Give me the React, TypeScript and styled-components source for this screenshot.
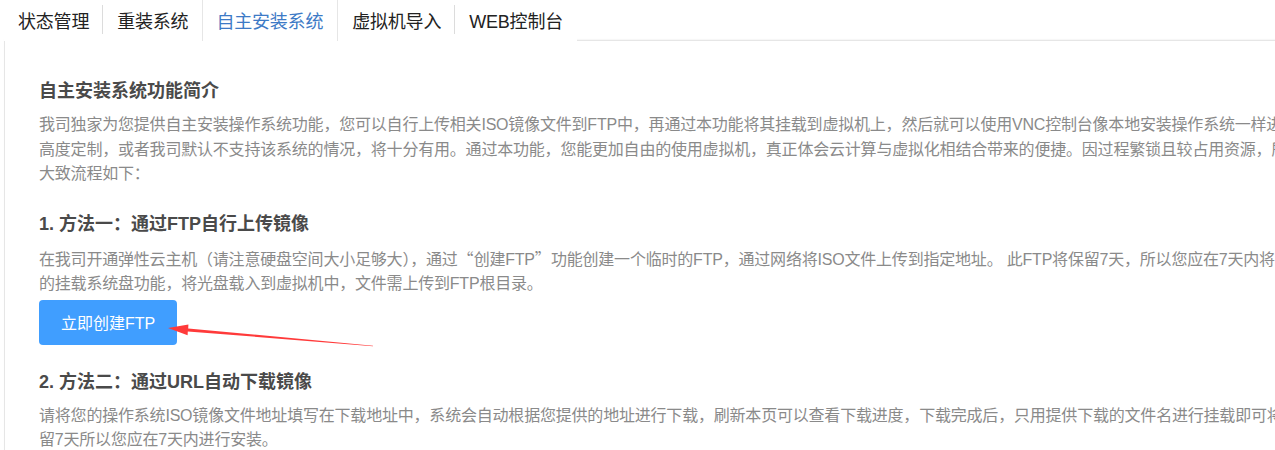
import React from 'react';
import styled, { createGlobalStyle } from 'styled-components';

const GlobalStyle = createGlobalStyle`
  html, body {
    margin: 0;
    padding: 0;
    background: #fff;
    overflow: hidden;
  }
  body {
    font-family: "Liberation Sans", "Noto Sans CJK SC", sans-serif;
  }
`;

const tabs = [
	{ id: 'tab1', name: '状态管理' },
	{ id: 'tab2', name: '重装系统' },
	{ id: 'tab3', name: '自主安装系统' },
	{ id: 'tab4', name: '虚拟机导入' },
	{ id: 'tab5', name: 'WEB控制台' },
];

const activeId = 'tab3';

// lines are clipped on the right in the screenshot, so each line is kept as-is
const sections = [
	{
		id: 'intro',
		title: '自主安装系统功能简介',
		lines: [
			<>我司独家为您提供自主安装操作系统功能，您可以自行上传相关ISO镜像文件到FTP中，再通过本功能将其挂载到虚拟机上，然后就可以使用VNC控制台像本地安装操作系统一样进行安装。对于需要对系统进行</>,
			<>高度定制，或者我司默认不支持该系统的情况，将十分有用。通过本功能，您能更加自由的使用虚拟机，真正体会云计算与虚拟化相结合带来的便捷。因过程繁锁且较占用资源，所以请谨慎使用。</>,
			<>大致流程如下：</>,
		],
	},
	{
		id: 'ftp',
		title: '1. 方法一：通过FTP自行上传镜像',
		lines: [
			<>在我司开通弹性云主机（请注意硬盘空间大小足够大），通过<Cjk>“</Cjk>创建FTP<Cjk>”</Cjk>功能创建一个临时的FTP，通过网络将ISO文件上传到指定地址。 此FTP将保留7天，所以您应在7天内将文件上传完毕，并使用我们</>,
			<>的挂载系统盘功能，将光盘载入到虚拟机中，文件需上传到FTP根目录。</>,
		],
		button: '立即创建FTP',
	},
	{
		id: 'url',
		title: '2. 方法二：通过URL自动下载镜像',
		lines: [
			<>请将您的操作系统ISO镜像文件地址填写在下载地址中，系统会自动根据您提供的地址进行下载，刷新本页可以查看下载进度，下载完成后，只用提供下载的文件名进行挂载即可将镜像载入，下载的文件将保</>,
			<>留7天所以您应在7天内进行安装。</>,
		],
	},
];

const Page = () => {
	return (
		<>
			<GlobalStyle />
			<Wrapper>
				<TabBar>
					{tabs.map((tab, i) => {
						const next = tabs[i + 1];
						const divider = tab.id !== activeId && !!next && next.id !== activeId;
						return (
							<Tab key={tab.id} active={tab.id === activeId} divider={divider}>
								{tab.name}
							</Tab>
						);
					})}
				</TabBar>
				<Panel>
					{sections.map((section) => (
						<Section key={section.id}>
							<Title>{section.title}</Title>
							<Text>
								{section.lines.map((line, i) => (
									<Line key={i}>{line}</Line>
								))}
							</Text>
							{section.button && (
								<ButtonRow>
									<Button>{section.button}</Button>
									<Arrow width="340" height="60" viewBox="0 0 340 60">
										<polygon
											points="129,28 149.4,24.4 149.2,28.4 334,45.7 334,46.2 148.8,31.4 148.6,35.2"
											fill="#ff3a3a"
										/>
									</Arrow>
								</ButtonRow>
							)}
						</Section>
					))}
				</Panel>
			</Wrapper>
		</>
	);
};

function Cjk({ children }: { children: React.ReactNode }) {
	return <CjkGlyph>{children}</CjkGlyph>;
}

const CjkGlyph = styled.span`
	font-family: "Noto Sans CJK SC", sans-serif;
	letter-spacing: 0;
`;

const Wrapper = styled.div`
	width: 1560px;
	padding-left: 4px;
`;

const TabBar = styled.ul`
	display: flex;
	margin: 0;
	padding: 0;
	list-style: none;
	height: 41px;
	position: relative;
	z-index: 1;
`;

const Tab = styled.li<{ active?: boolean; divider?: boolean }>`
	position: relative;
	display: flex;
	align-items: center;
	height: 41px;
	box-sizing: border-box;
	padding: 0 14px 2px ${(p) => (p.active ? '13px' : '14px')};
	font-size: 18px;
	letter-spacing: -0.2px;
	color: ${(p) => (p.active ? '#3d7ac6' : '#222')};
	background: #fff;
	border-left: ${(p) => (p.active ? '1px solid #e6e6e6' : 'none')};
	border-right: ${(p) => (p.active ? '1px solid #e6e6e6' : 'none')};

	&::after {
		content: '';
		display: ${(p) => (p.divider ? 'block' : 'none')};
		position: absolute;
		right: 0;
		top: 5px;
		height: 29px;
		width: 1px;
		background: #dcdcdc;
	}
`;

const Panel = styled.div`
	margin-top: -1px;
	border-top: 1px solid #e6e6e6;
	border-left: 1px solid #e6e6e6;
	box-shadow: 0 -1px 1px rgba(0, 0, 0, 0.03);
	padding: 37px 0 30px 34px;
	background: #fff;
`;

const Section = styled.section`
	margin-bottom: 24px;
`;

const Title = styled.h3`
	margin: 0 0 9px;
	font-size: 18px;
	line-height: 26px;
	font-weight: bold;
	color: #4a4a4a;
`;

const Text = styled.div`
	font-size: 16px;
	line-height: 24.5px;
	letter-spacing: -0.2px;
	color: #8a8a8a;
`;

const Line = styled.div`
	white-space: nowrap;
`;

const ButtonRow = styled.div`
	position: relative;
	display: flex;
	margin-top: 3px;
	height: 45px;
`;

const Button = styled.button`
	height: 45px;
	padding: 0 22px;
	border: none;
	border-radius: 4px;
	background: #409eff;
	color: #fff;
	font-family: inherit;
	font-size: 16px;
	cursor: pointer;
`;

const Arrow = styled.svg`
	position: absolute;
	left: 0;
	top: 0;
	pointer-events: none;
`;

export default Page;
